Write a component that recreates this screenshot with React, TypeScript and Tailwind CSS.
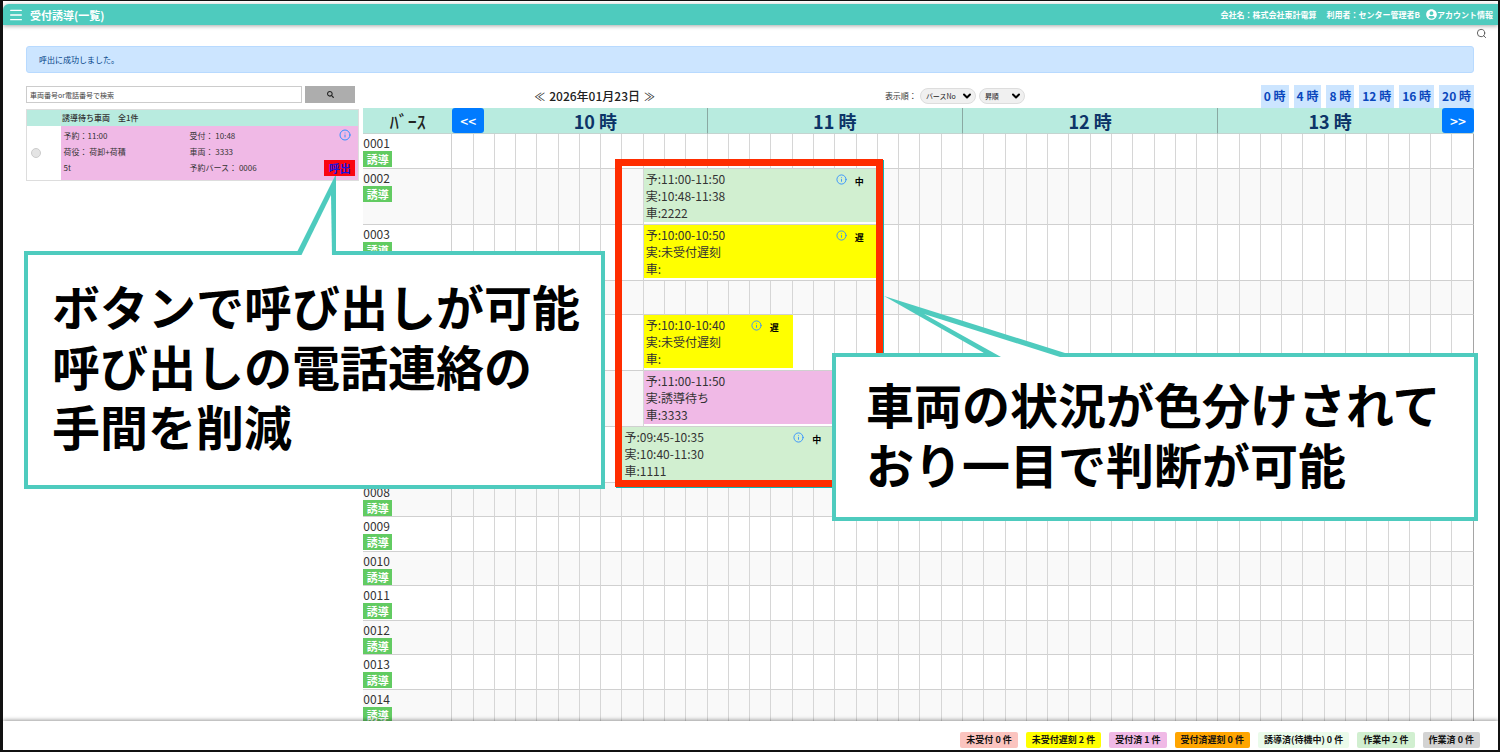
import React from 'react';
import { ChevronDown, Info, Menu, Search } from 'lucide-react';
import { FaSearch, FaUserCircle } from 'react-icons/fa';
import { clsx } from 'clsx';

interface Booking {
  start: number;
  span: number;
  tone: 'working' | 'late' | 'waiting';
  lines: string[];
  mark?: string;
}

interface Berth {
  no: string;
  booking?: Booking;
}

const CELLS_PER_HOUR = 12;
const hours = [10, 11, 12, 13];
const jumpHours = [0, 4, 8, 12, 16, 20];

const toneClass = {
  working: 'bg-[#d1efd0]',
  late: 'bg-[#ffff00]',
  waiting: 'bg-[#f0b9e6]',
};

const berths: Berth[] = [
  { no: '0001' },
  {
    no: '0002',
    booking: { start: 9, span: 11, tone: 'working', mark: '中', lines: ['予:11:00-11:50', '実:10:48-11:38', '車:2222'] },
  },
  {
    no: '0003',
    booking: { start: 9, span: 11, tone: 'late', mark: '遅', lines: ['予:10:00-10:50', '実:未受付遅刻', '車:'] },
  },
  { no: '0004' },
  {
    no: '0005',
    booking: { start: 9, span: 7, tone: 'late', mark: '遅', lines: ['予:10:10-10:40', '実:未受付遅刻', '車:'] },
  },
  {
    no: '0006',
    booking: { start: 9, span: 11, tone: 'waiting', lines: ['予:11:00-11:50', '実:誘導待ち', '車:3333'] },
  },
  {
    no: '0007',
    booking: { start: 8, span: 10, tone: 'working', mark: '中', lines: ['予:09:45-10:35', '実:10:40-11:30', '車:1111'] },
  },
  { no: '0008' },
  { no: '0009' },
  { no: '0010' },
  { no: '0011' },
  { no: '0012' },
  { no: '0013' },
  { no: '0014' },
];

const statusCounts = [
  { label: '未受付 0 件', color: 'bg-[#fbc4bf]' },
  { label: '未受付遅刻 2 件', color: 'bg-[#ffff00]' },
  { label: '受付済 1 件', color: 'bg-[#f0b9e6]' },
  { label: '受付済遅刻 0 件', color: 'bg-[#ffa500]' },
  { label: '誘導済(待機中) 0 件', color: 'bg-[#eafbea]' },
  { label: '作業中 2 件', color: 'bg-[#d1efd0]' },
  { label: '作業済 0 件', color: 'bg-[#d3d3d3]' },
];

const Header: React.FC = () => (
  <header className="z-10 flex h-[21px] shrink-0 items-center rounded-tl-md bg-[#4ecbbe] pr-[5px] pl-[5px] font-bold text-white shadow-[0_1px_4px_rgba(0,0,0,0.35)]">
    <button type="button" aria-label="メニュー">
      <Menu className="size-4" strokeWidth={2} />
    </button>
    <h1 className="ml-1.5 text-[11px] leading-4">受付誘導(一覧)</h1>
    <div className="ml-auto flex items-center text-[8px] leading-3">
      <span>会社名：株式会社東計電算</span>
      <span className="ml-2.5">利用者：センター管理者B</span>
      <a href="#account" className="ml-1.5 flex items-center">
        <FaUserCircle className="size-[11px]" />
        アカウント情報
      </a>
    </div>
  </header>
);

const WaitingList: React.FC = () => (
  <section className="pt-0.5">
    <form className="flex gap-[3px] pr-1" onSubmit={(e) => e.preventDefault()}>
      <input
        type="text"
        aria-label="車両番号or電話番号で検索"
        placeholder="車両番号or電話番号で検索"
        className="h-[17px] min-w-0 flex-1 border border-[#ccc] px-[3px] text-[7px] placeholder:text-[#444] placeholder:opacity-100"
      />
      <button type="submit" aria-label="検索" className="flex w-[50px] items-center justify-center bg-[#adadad]">
        <FaSearch className="size-[7px] text-[#222]" />
      </button>
    </form>
    <table className="mt-1.5 w-full border border-[#ddd] text-[8px] text-[#333]">
      <thead>
        <tr className="h-4 bg-[#b8ebdf]">
          <th className="w-[34px] border-r border-[#c9e5de]" aria-label="選択" />
          <th className="pl-px text-left leading-3 font-medium">誘導待ち車両　全1件</th>
        </tr>
      </thead>
      <tbody>
        <tr className="h-[54px]">
          <td className="pl-1">
            <input
              type="radio"
              name="vehicle"
              aria-label="3333"
              className="block size-2.5 appearance-none rounded-full border border-[#ccc] bg-[#e4e4e4]"
            />
          </td>
          <td className="bg-[#f0b9e6] pt-0.5 pr-[3px] pb-1 pl-[3px] align-top">
            <div className="flex">
              <div className="grid flex-1 grid-cols-[126px_1fr] leading-4">
                <span>予約：11:00</span>
                <span>受付： 10:48</span>
                <span>荷役： 荷卸+荷積</span>
                <span>車両： 3333</span>
                <span>5t</span>
                <span>予約バース： 0006</span>
              </div>
              <div className="flex flex-col items-end justify-between pt-px">
                <button type="button" aria-label="詳細" className="mr-1 text-[#3390ff]">
                  <Info className="size-3" strokeWidth={2} />
                </button>
                <button type="button" className="h-4 w-[31px] bg-[#fa0510] text-[11px] leading-4 font-bold text-[#1414e0]">
                  呼出
                </button>
              </div>
            </div>
          </td>
        </tr>
      </tbody>
    </table>
  </section>
);

const SortSelect: React.FC<{ label: string; value: string; width: string }> = ({ label, value, width }) => (
  <div className={clsx('relative', width)}>
    <select
      aria-label={label}
      defaultValue={value}
      className="block h-4 w-full appearance-none rounded-full border border-[#ddd] bg-[#f0f0f0] pl-[5px] text-[7px] leading-3 text-[#222]"
    >
      <option>{value}</option>
    </select>
    <ChevronDown className="pointer-events-none absolute top-0.5 right-[3px] size-3 text-black" strokeWidth={4} />
  </div>
);

const Toolbar: React.FC = () => (
  <div className="grid h-6 grid-cols-[5fr_3fr_4fr] items-center">
    <div className="flex items-center justify-center gap-1 text-[12px] leading-4 text-[#222]">
      <button type="button" aria-label="前日" className="text-[11px]">≪</button>
      <span className="font-medium">2026年01月23日</span>
      <button type="button" aria-label="翌日" className="text-[11px]">≫</button>
    </div>
    <div className="flex items-center justify-center gap-[3px] pr-5 text-[8px] text-[#333]">
      <span>表示順：</span>
      <SortSelect label="表示順" value="バースNo" width="w-14" />
      <SortSelect label="並び" value="昇順" width="w-[46px]" />
    </div>
    <div className="flex items-center justify-end gap-[5px]">
      {jumpHours.map((h) => (
        <button
          key={h}
          type="button"
          className="h-[23px] bg-[#cce5ff] px-[3px] text-[12px] leading-4 font-bold whitespace-nowrap text-[#0a47bd]"
        >
          {h} 時
        </button>
      ))}
    </div>
  </div>
);

const BookingCell: React.FC<{ booking: Booking }> = ({ booking }) => (
  <td colSpan={booking.span} className="border-b border-[#d0d0d0] bg-white p-0 align-top">
    <div className={clsx('flex h-[53px] items-start pr-3.5 pl-0.5', toneClass[booking.tone])}>
      <div className="flex-1 pt-px">
        {booking.lines.map((line) => (
          <p key={line} className="leading-[17px] whitespace-nowrap">{line}</p>
        ))}
      </div>
      {booking.mark && (
        <div className="flex gap-2 pt-[5px]">
          <button type="button" aria-label="詳細" className="self-start text-[#3390ff]">
            <Info className="size-[11px]" strokeWidth={2} />
          </button>
          <span className="pt-0.5 text-[9px] leading-3 font-bold text-black">{booking.mark}</span>
        </div>
      )}
    </div>
  </td>
);

const BerthRow: React.FC<{ berth: Berth }> = ({ berth }) => {
  const total = hours.length * CELLS_PER_HOUR;
  const cells: React.ReactNode[] = [];
  for (let i = 0; i < total; i++) {
    if (berth.booking && i === berth.booking.start) {
      cells.push(<BookingCell key={i} booking={berth.booking} />);
      i += berth.booking.span - 1;
      continue;
    }
    cells.push(
      <td key={i} className="border-r border-b border-[#d0d0d0] border-r-[#d6d6d6] p-0 last:border-r-[#a5a5a5]" />
    );
  }

  return (
    <tr className={clsx('even:bg-[#f9f9f9]', berth.booking ? 'h-[56px]' : 'h-[35px] even:h-[34px]')}>
      <th scope="row" className="border-r border-b border-[#d0d0d0] p-0 text-left align-top font-normal">
        <span className="block leading-[17px]">{berth.no}</span>
        <button type="button" className="block h-4 w-[29px] bg-[#62cb62] text-[11px] leading-4 font-bold text-white">
          誘導
        </button>
      </th>
      {cells}
    </tr>
  );
};

const Timeline: React.FC = () => (
  <table className="w-full table-fixed border-separate border-spacing-0 text-[12px] text-[#333]">
    <colgroup>
      <col className="w-[89px]" />
      {Array.from({ length: hours.length * CELLS_PER_HOUR }, (_, i) => (
        <col key={i} />
      ))}
    </colgroup>
    <thead>
      <tr className="h-[26px] bg-[#b8ebdf] text-[18px] leading-6">
        <th className="border-b border-[#c4d4d0] p-0 font-medium text-[#222]">ﾊﾞｰｽ</th>
        {hours.map((h, i) => (
          <th
            key={h}
            colSpan={CELLS_PER_HOUR}
            className={clsx('border-b border-b-[#c4d4d0] p-0 font-bold text-[#0c3468]', i < hours.length - 1 && 'border-r border-r-[#8aa8a2]')}
          >
            <div className="flex items-center">
              {i === 0 && (
                <button type="button" aria-label="前の時間" className="h-[25px] w-8 rounded-[3px] bg-[#007bff] text-[14px] font-medium text-white">
                  &lt;&lt;
                </button>
              )}
              <span className="flex-1">{h} 時</span>
              {i === hours.length - 1 && (
                <button type="button" aria-label="次の時間" className="h-[25px] w-8 rounded-[3px] bg-[#007bff] text-[14px] font-medium text-white">
                  &gt;&gt;
                </button>
              )}
            </div>
          </th>
        ))}
      </tr>
    </thead>
    <tbody>
      {berths.map((b) => (
        <BerthRow key={b.no} berth={b} />
      ))}
    </tbody>
  </table>
);

const StatusBar: React.FC = () => (
  <footer className="z-10 flex shrink-0 justify-end gap-2 bg-white pt-[11px] pr-[18px] pb-0.5 shadow-[0_-1px_4px_rgba(0,0,0,0.4)]">
    {statusCounts.map((s) => (
      <span key={s.label} className={clsx('h-4 rounded-xs px-1.5 text-[9px] leading-4 font-bold whitespace-nowrap text-[#111]', s.color)}>
        {s.label}
      </span>
    ))}
  </footer>
);

// Notes laid over the screen: a red frame and two speech balloons.
const Annotations: React.FC = () => (
  <div className="pointer-events-none absolute inset-0 z-20">
    <div className="absolute top-[158px] left-[612px] h-[328px] w-[268px] border-[7px] border-[#ff2d00] shadow-[1px_1px_0_#12b4b4]" />

    <div className="absolute top-[250px] left-[21px] w-[581px] border-4 border-[#4ecbbe] bg-white pt-5 pb-[30px] pl-6 text-[48px] leading-[60px] font-bold whitespace-nowrap text-black">
      <p>ボタンで呼び出しが可能</p>
      <p>呼び出しの電話連絡の</p>
      <p>手間を削減</p>
      <svg className="absolute -top-[79px] left-[269px]" width="44" height="80" viewBox="0 0 44 80">
        <path d="M0 76 L38 0 L39 0 L39 76 Z" fill="#4ecbbe" />
        <path d="M4 80 L34 19 L35 80 Z" fill="#fff" />
      </svg>
    </div>

    <div className="absolute top-[352px] left-[829px] w-[646px] border-4 border-[#4ecbbe] bg-white pt-4 pb-6 pl-[30px] text-[48px] leading-[60px] font-bold whitespace-nowrap text-black">
      <p>車両の状況が色分けされて</p>
      <p>おり一目で判断が可能</p>
      <svg className="absolute -top-[61px] left-[48px]" width="182" height="61" viewBox="0 0 182 61">
        <path d="M0 0 L100 57 L181 57 Z" fill="#4ecbbe" />
        <path d="M40 18 L117 61 L176 61 Z" fill="#fff" />
      </svg>
    </div>
  </div>
);

export default function App() {
  return (
    <div className="relative flex h-screen flex-col overflow-hidden border-t border-r-2 border-b-2 border-l-[3px] border-[#111] bg-white pt-[3px] font-['Noto_Sans_CJK_JP',sans-serif]">
      <Header />
      <main className="flex min-h-0 flex-1 flex-col overflow-hidden">
        <div className="flex h-[21px] shrink-0 justify-end pt-[3px] pr-[11px]">
          <button type="button" aria-label="検索を開く" className="self-start text-[#555]">
            <Search className="size-[11px]" strokeWidth={2} />
          </button>
        </div>
        <div className="pr-6 pl-[23px]">
          <div role="alert" className="h-[27px] rounded-[3px] border border-[#b8daff] bg-[#cce5ff] px-3 text-[8px] leading-[25px] text-[#004085]">
            呼出に成功しました。
          </div>
          <div className="mt-[11px] grid grid-cols-[3fr_10fr] gap-1">
            <WaitingList />
            <section className="min-w-0">
              <Toolbar />
              <Timeline />
            </section>
          </div>
        </div>
      </main>
      <StatusBar />
      <Annotations />
    </div>
  );
}
